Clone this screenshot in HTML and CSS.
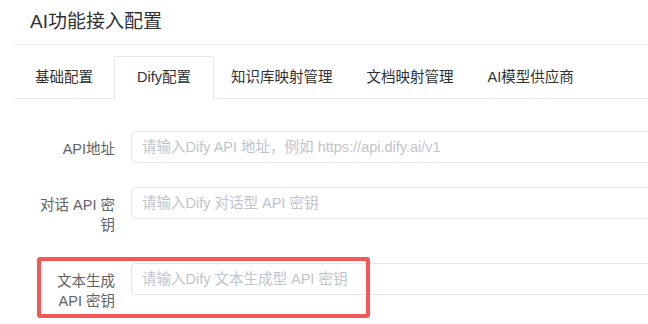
FILE: index.html
```html
<!DOCTYPE html>
<html lang="zh-CN">
<head>
    <meta charset="UTF-8">
    <meta name="viewport" content="width=device-width, initial-scale=1.0">
    <title>AI功能接入配置</title>
    <link rel="stylesheet" href="styles.css">
</head>
<body>
    <div class="page">
        <div class="card">
            <div class="card-header">AI功能接入配置</div>
            <div class="card-body">
                <div class="tabs">
                    <div class="tab">基础配置</div>
                    <div class="tab active">Dify配置</div>
                    <div class="tab">知识库映射管理</div>
                    <div class="tab">文档映射管理</div>
                    <div class="tab">AI模型供应商</div>
                </div>
                <form class="form">
                    <div class="form-item">
                        <label class="form-label">API地址</label>
                        <div class="form-control">
                            <input type="text" placeholder="请输入Dify API 地址，例如 https://api.dify.ai/v1">
                        </div>
                    </div>
                    <div class="form-item">
                        <label class="form-label">对话 API 密钥</label>
                        <div class="form-control">
                            <input type="text" placeholder="请输入Dify 对话型 API 密钥">
                        </div>
                    </div>
                    <div class="form-item">
                        <label class="form-label">文本生成 API 密钥</label>
                        <div class="form-control">
                            <input type="text" placeholder="请输入Dify 文本生成型 API 密钥">
                        </div>
                        <span class="mark"></span>
                    </div>
                </form>
            </div>
        </div>
    </div>
</body>
</html>
```

FILE: styles.css
```css
html, body {
    margin: 0;
    padding: 0;
    background-color: #fff;
    overflow: hidden;
}
body {
    font-family: "Liberation Sans", "Noto Sans CJK SC", sans-serif;
    color: #303133;
}
.page {
    width: 900px;
    padding-left: 14px;
}
.card-header {
    height: 44px;
    line-height: 44px;
    padding-left: 16px;
    font-size: 19px;
    color: #303133;
    border-bottom: 1px solid #ebeef5;
}
.card-body {
    padding-top: 11px;
}
.tabs {
    display: flex;
    align-items: flex-start;
    border-bottom: 1px solid #e4e7ed;
}
.tab {
    box-sizing: border-box;
    min-width: 100px;
    height: 42px;
    line-height: 41px;
    padding: 0 16px;
    font-size: 14.5px;
    text-align: center;
    color: #303133;
    border: 1px solid transparent;
    border-bottom: none;
}
.tab.active {
    height: 43px;
    margin-bottom: -1px;
    background-color: #fff;
    border-color: #e4e7ed;
    border-radius: 2px 2px 0 0;
}
.form {
    padding: 32px 0 0 23px;
    margin: 0;
}
.form-item {
    position: relative;
    display: flex;
    align-items: flex-start;
    margin-bottom: 24px;
}
.form-label {
    box-sizing: border-box;
    width: 94px;
    flex-shrink: 0;
    padding: 8px 16px 4px 0;
    line-height: 20px;
    font-size: 14.5px;
    text-align: right;
    color: #606266;
}
.form-control {
    flex: 1;
}
.form-control input {
    box-sizing: border-box;
    width: 100%;
    height: 32px;
    padding: 0 10px;
    font-family: inherit;
    font-size: 14.5px;
    color: #606266;
    border: 1px solid #e4e7ed;
    border-radius: 4px;
    outline: none;
}
.form-control input::placeholder {
    color: #c0c4cc;
}
.mark {
    position: absolute;
    left: 0;
    top: -6px;
    box-sizing: border-box;
    width: 333px;
    height: 61px;
    border: 4px solid #f55656;
    border-radius: 3px;
    pointer-events: none;
}
```
